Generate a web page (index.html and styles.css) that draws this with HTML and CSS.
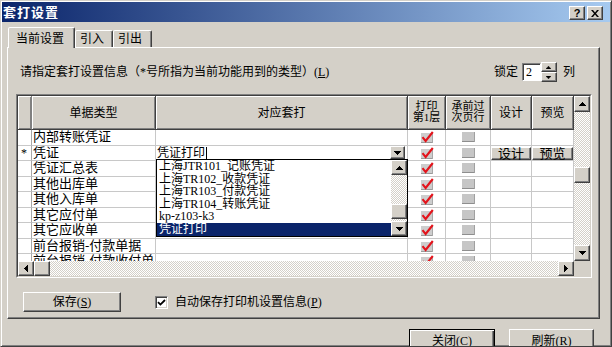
FILE: index.html
```html
<!DOCTYPE html>
<html lang="zh-CN">
<head>
<meta charset="utf-8">
<title>套打设置</title>
<link rel="stylesheet" href="styles.css">
</head>
<body>
<svg class="defs" width="0" height="0" aria-hidden="true">
  <symbol id="rc" viewBox="0 0 14 12">
    <rect x="1" y="2" width="12" height="10" fill="#cdcdcd"/>
    <rect x="1" y="11" width="12" height="1" fill="#9a9a9a"/>
    <rect x="12" y="2" width="1" height="10" fill="#a8a8a8"/>
    <path d="M2.5 6.2 L5.6 10 L12.8 1" fill="none" stroke="#e3141c" stroke-width="2.1"/>
  </symbol>
  <symbol id="gb" viewBox="0 0 13 10">
    <rect width="13" height="10" fill="#c6c6c6"/>
    <rect y="9" width="13" height="1" fill="#8e8e8e"/>
    <rect x="12" width="1" height="10" fill="#a0a0a0"/>
  </symbol>
  <symbol id="up" viewBox="0 0 7 4"><path d="M3 0h1v1h1v1h1v1h1v1H0V3h1V2h1V1h1z"/></symbol>
  <symbol id="down" viewBox="0 0 7 4"><path d="M0 0h7v1H6v1H5v1H4v1H3V3H2V2H1V1H0z"/></symbol>
  <symbol id="left" viewBox="0 0 4 7"><path d="M0 3h1V2h1V1h1V0h1v7H3V6H2V5H1V4H0z"/></symbol>
  <symbol id="right" viewBox="0 0 4 7"><path d="M0 0h1v1h1v1h1v1h1v1H3v1H2v1H1v1H0z"/></symbol>
</svg>
<div class="window">
  <div class="titlebar">
    <span class="title">套打设置</span>
    <div class="caption-btns">
      <div class="cap-btn raised"><span class="q">?</span></div>
      <div class="cap-btn raised">
        <svg width="8" height="7" viewBox="0 0 8 7"><path d="M0 0h2l2 2.5 2-2.5h2L5 3.5 8 7H6L4 4.5 2 7H0l3-3.5z"/></svg>
      </div>
    </div>
  </div>

  <div class="tabs">
    <div class="tab active">当前设置</div>
    <div class="tab">引入</div>
    <div class="tab">引出</div>
  </div>

  <div class="panel">
    <div class="info-row">
      <span class="info">请指定套打设置信息（*号所指为当前功能用到的类型）(<u>L</u>)</span>
      <div class="lock">
        <span>锁定</span>
        <div class="spin-input">2</div>
        <div class="spin">
          <div class="spin-btn raised"><svg width="5" height="3" viewBox="0 0 7 4"><use href="#up"/></svg></div>
          <div class="spin-btn raised"><svg width="5" height="3" viewBox="0 0 7 4"><use href="#down"/></svg></div>
        </div>
        <span class="lie">列</span>
      </div>
    </div>

    <div class="grid">
      <div class="grid-inner">
        <div class="grid-main">
          <div class="viewport">
            <div class="row head">
              <div class="c"></div>
              <div class="c">单据类型</div>
              <div class="c">对应套打</div>
              <div class="c two"><span>打印</span><span>第1层</span></div>
              <div class="c two"><span>承前过</span><span>次页行</span></div>
              <div class="c">设计</div>
              <div class="c">预览</div>
            </div>

            <div class="row body">
              <div class="c rh"></div>
              <div class="c">内部转账凭证</div>
              <div class="c"></div>
              <div class="c ck"><svg width="14" height="12"><use href="#rc"/></svg></div>
              <div class="c ck"><svg width="13" height="10"><use href="#gb"/></svg></div>
              <div class="c"></div>
              <div class="c"></div>
            </div>

            <div class="row body">
              <div class="c rh">*</div>
              <div class="c">凭证</div>
              <div class="c combo">
                <span class="combo-text">凭证打印</span><span class="caret"></span>
                <div class="drop-btn raised"><svg width="7" height="4"><use href="#down"/></svg></div>
              </div>
              <div class="c ck"><svg width="14" height="12"><use href="#rc"/></svg></div>
              <div class="c ck"><svg width="13" height="10"><use href="#gb"/></svg></div>
              <div class="c bc"><div class="cell-btn raised">设计</div></div>
              <div class="c bc"><div class="cell-btn raised">预览</div></div>
            </div>

            <div class="row body">
              <div class="c rh"></div>
              <div class="c">凭证汇总表</div>
              <div class="c"></div>
              <div class="c ck"><svg width="14" height="12"><use href="#rc"/></svg></div>
              <div class="c ck"><svg width="13" height="10"><use href="#gb"/></svg></div>
              <div class="c"></div>
              <div class="c"></div>
            </div>

            <div class="row body">
              <div class="c rh"></div>
              <div class="c">其他出库单</div>
              <div class="c"></div>
              <div class="c ck"><svg width="14" height="12"><use href="#rc"/></svg></div>
              <div class="c ck"><svg width="13" height="10"><use href="#gb"/></svg></div>
              <div class="c"></div>
              <div class="c"></div>
            </div>

            <div class="row body">
              <div class="c rh"></div>
              <div class="c">其他入库单</div>
              <div class="c"></div>
              <div class="c ck"><svg width="14" height="12"><use href="#rc"/></svg></div>
              <div class="c ck"><svg width="13" height="10"><use href="#gb"/></svg></div>
              <div class="c"></div>
              <div class="c"></div>
            </div>

            <div class="row body">
              <div class="c rh"></div>
              <div class="c">其它应付单</div>
              <div class="c"></div>
              <div class="c ck"><svg width="14" height="12"><use href="#rc"/></svg></div>
              <div class="c ck"><svg width="13" height="10"><use href="#gb"/></svg></div>
              <div class="c"></div>
              <div class="c"></div>
            </div>

            <div class="row body">
              <div class="c rh"></div>
              <div class="c">其它应收单</div>
              <div class="c"></div>
              <div class="c ck"><svg width="14" height="12"><use href="#rc"/></svg></div>
              <div class="c ck"><svg width="13" height="10"><use href="#gb"/></svg></div>
              <div class="c"></div>
              <div class="c"></div>
            </div>

            <div class="row body">
              <div class="c rh"></div>
              <div class="c">前台报销-付款单据</div>
              <div class="c"></div>
              <div class="c ck"><svg width="14" height="12"><use href="#rc"/></svg></div>
              <div class="c ck"><svg width="13" height="10"><use href="#gb"/></svg></div>
              <div class="c"></div>
              <div class="c"></div>
            </div>

            <div class="row body">
              <div class="c rh"></div>
              <div class="c">前台报销-付款收付单</div>
              <div class="c"></div>
              <div class="c ck"><svg width="14" height="12"><use href="#rc"/></svg></div>
              <div class="c ck"><svg width="13" height="10"><use href="#gb"/></svg></div>
              <div class="c"></div>
              <div class="c"></div>
            </div>

            <div class="droplist">
              <div class="items">
                <div class="item">上海JTR101_记账凭证</div>
                <div class="item">上海TR102_收款凭证</div>
                <div class="item">上海TR103_付款凭证</div>
                <div class="item">上海TR104_转账凭证</div>
                <div class="item">kp-z103-k3</div>
                <div class="item sel">凭证打印</div>
              </div>
              <div class="lscroll">
                <div class="arrow-v raised"><svg width="7" height="4"><use href="#up"/></svg></div>
                <div class="track-v">
                  <div class="thumb-v raised lthumb"></div>
                </div>
                <div class="arrow-v raised"><svg width="7" height="4"><use href="#down"/></svg></div>
              </div>
            </div>
          </div>

          <div class="vscroll">
            <div class="arrow-v big raised"><svg width="7" height="4"><use href="#up"/></svg></div>
            <div class="track-v">
              <div class="thumb-v big raised gthumb"></div>
            </div>
            <div class="arrow-v big raised"><svg width="7" height="4"><use href="#down"/></svg></div>
          </div>
        </div>

        <div class="hscroll">
          <div class="arrow-h raised"><svg width="4" height="7"><use href="#left"/></svg></div>
          <div class="thumb-h raised"></div>
          <div class="track-h"></div>
          <div class="arrow-h raised"><svg width="4" height="7"><use href="#right"/></svg></div>
          <div class="corner"></div>
        </div>
      </div>
    </div>

    <div class="bottom-row">
      <div class="btn save raised">保存(<u>S</u>)</div>
      <div class="chk">
        <span class="chk-box">
          <svg width="9" height="9" viewBox="0 0 9 9"><path d="M1 4.2 L3.4 6.6 L8 2" fill="none" stroke="#000" stroke-width="1.8"/></svg>
        </span>
        <span class="chk-label">自动保存打印机设置信息(<u>P</u>)</span>
      </div>
    </div>
  </div>

  <div class="footer">
    <div class="btn default">关闭(<u>C</u>)</div>
    <div class="btn raised">刷新(<u>R</u>)</div>
  </div>
</div>
</body>
</html>
```

FILE: styles.css
```css
* {
  box-sizing: border-box;
  margin: 0;
  padding: 0;
}

html,
body {
  width: 612px;
  height: 347px;
  overflow: hidden;
}

body {
  background: #d4d0c8;
  font-family: "Liberation Serif", "Noto Sans CJK SC", serif;
  font-size: 12px;
  color: #000;
}

.defs {
  display: block;
  width: 0;
  height: 0;
  overflow: hidden;
}

u {
  text-decoration: underline;
  text-underline-offset: 1px;
}

/* generic 3D raised look */
.raised {
  background: #d4d0c8;
  border: 1px solid;
  border-color: #fff #404040 #404040 #fff;
  box-shadow: inset -1px -1px #808080;
}

.window {
  width: 612px;
  height: 347px;
  overflow: hidden;
  background: #d4d0c8;
  border: 1px solid;
  border-color: #d4d0c8 #404040 #404040 #d4d0c8;
  box-shadow: inset 1px 1px #fff, inset -1px -1px #808080;
  padding: 1px;
}

/* title bar */
.titlebar {
  height: 20px;
  display: flex;
  justify-content: space-between;
  align-items: flex-start;
  background: linear-gradient(to right, #0a246a, #a6caf0);
  padding: 0 7px 0 1px;
}

.title {
  color: #fff;
  font-family: "Noto Sans CJK SC", sans-serif;
  font-weight: bold;
  font-size: 13px;
  letter-spacing: 1px;
  line-height: 20px;
}

.caption-btns {
  display: flex;
  gap: 2px;
  margin-top: 4px;
}

.cap-btn {
  width: 16px;
  height: 14px;
  display: flex;
  align-items: center;
  justify-content: center;
}

.cap-btn .q {
  font-family: "Liberation Sans", sans-serif;
  font-weight: bold;
  font-size: 11px;
  line-height: 11px;
}

/* tabs */
.tabs {
  display: flex;
  align-items: flex-end;
  height: 20px;
  margin: 5px 0 0 6px;
  position: relative;
  z-index: 1;
}

.tab {
  height: 17px;
  border: 1px solid;
  border-bottom: none;
  border-color: #fff #404040 transparent #fff;
  box-shadow: inset -1px 0 #808080;
  border-radius: 2px 2px 0 0;
  padding-left: 4px;
  line-height: 16px;
  background: #d4d0c8;
}

.tab:nth-child(2) {
  width: 38px;
}

.tab:nth-child(3) {
  width: 39px;
}

.tab.active {
  width: 67px;
  height: 21px;
  margin-bottom: -1px;
  padding: 3px 0 0 7px;
}

/* tab panel */
.panel {
  margin-left: 5px;
  width: 593px;
  height: 272px;
  border: 1px solid;
  border-color: #fff #404040 #404040 #fff;
  box-shadow: inset -1px -1px #808080;
  padding: 14px 0 0 8px;
}

.info-row {
  width: 576px;
  height: 20px;
  display: flex;
  align-items: center;
  justify-content: space-between;
  padding: 0 17px 0 4px;
  line-height: 14px;
}

.lock {
  display: flex;
  align-items: center;
}

.spin-input {
  width: 19px;
  height: 18px;
  margin-left: 4px;
  background: #fff;
  border: 1px solid;
  border-color: #808080 #fff #fff #808080;
  box-shadow: inset 1px 1px #404040;
  padding: 1px 0 0 3px;
  line-height: 14px;
}

.spin {
  width: 16px;
  height: 20px;
  display: flex;
  flex-direction: column;
}

.spin-btn {
  flex: 1;
  display: flex;
  align-items: center;
  justify-content: center;
}

.lie {
  margin-left: 6px;
}

/* grid */
.grid {
  margin-top: 12px;
  width: 576px;
  height: 184px;
  border: 1px solid;
  border-color: #808080 #fff #fff #808080;
}

.grid-inner {
  height: 100%;
  border: 1px solid;
  border-color: #404040 #d4d0c8 #d4d0c8 #404040;
  display: flex;
  flex-direction: column;
  background: #fff;
}

.grid-main {
  display: flex;
  height: 165px;
}

.viewport {
  position: relative;
  width: 556px;
  height: 165px;
  overflow: hidden;
}

.row {
  display: grid;
  grid-template-columns: 14px 124px 252px 38px 45px 41px 42px;
  height: 15.5px;
}

.row.head {
  height: 34px;
}

.head .c {
  background: #d4d0c8;
  border-right: 1px solid #404040;
  border-bottom: 1px solid #404040;
  box-shadow: inset 1px 1px #fff, inset -1px -1px #808080;
  display: flex;
  align-items: center;
  justify-content: center;
  text-align: center;
  line-height: 14px;
}

.head .c.two {
  flex-direction: column;
  font-size: 11px;
  line-height: 11px;
  padding-bottom: 2px;
}

.head .c:first-child {
  border-right-color: #808080;
}

.body .c {
  border-right: 1px solid #c8c8c8;
  border-bottom: 1px solid #c8c8c8;
  font-size: 13px;
  line-height: 14px;
  padding-left: 1px;
  white-space: nowrap;
  overflow: hidden;
}

.body .rh {
  border-right-color: #a8a8a8;
  padding-left: 3px;
  font-size: 12px;
}

.body .ck {
  display: flex;
  align-items: center;
  justify-content: center;
  padding-left: 0;
}

.body .combo {
  display: flex;
  align-items: center;
  font-size: 12px;
  overflow: visible;
}

.caret {
  width: 1px;
  height: 12px;
  background: #000;
  margin-left: 1px;
}

.drop-btn {
  margin-left: auto;
  margin-right: 2px;
  width: 15px;
  height: 13px;
  display: flex;
  align-items: center;
  justify-content: center;
}

.body .bc {
  padding: 1px 0 0 0;
}

.cell-btn {
  width: 100%;
  height: 100%;
  text-align: center;
  font-size: 13px;
  line-height: 12px;
}

/* drop-down list (overlay) */
.droplist {
  position: absolute;
  left: 138px;
  top: 63px;
  width: 252px;
  height: 78px;
  border: 1px solid #000;
  background: #fff;
  display: flex;
  z-index: 2;
}

.droplist .items {
  flex: 1;
  overflow: hidden;
}

.droplist .item {
  height: 12.6px;
  line-height: 12.6px;
  font-size: 12px;
  padding-left: 2px;
  white-space: nowrap;
}

.droplist .item.sel {
  background: #0a246a;
  color: #fff;
}

.lscroll,
.vscroll {
  width: 16px;
  display: flex;
  flex-direction: column;
}

.arrow-v {
  height: 15px;
  display: flex;
  align-items: center;
  justify-content: center;
}

.arrow-v.big {
  height: 16px;
}

.track-v {
  flex: 1;
  background: repeating-conic-gradient(#d4d0c8 0 25%, #fff 0 50%) 0 0 / 2px 2px;
}

.thumb-v {
  height: 15px;
}

.lthumb {
  margin-top: 29px;
}

.gthumb {
  height: 16px;
  margin-top: 55px;
}

.hscroll {
  display: flex;
  height: 15px;
}

.arrow-h {
  width: 16px;
  display: flex;
  align-items: center;
  justify-content: center;
}

.thumb-h {
  width: 16px;
}

.track-h {
  flex: 1;
  background: repeating-conic-gradient(#d4d0c8 0 25%, #fff 0 50%) 0 0 / 2px 2px;
}

.corner {
  width: 16px;
  background: #d4d0c8;
}

/* bottom row */
.bottom-row {
  display: flex;
  align-items: center;
  margin-top: 14px;
  padding-left: 7px;
}

.btn {
  display: flex;
  align-items: center;
  justify-content: center;
  line-height: 14px;
}

.btn.save {
  width: 98px;
  height: 20px;
}

.chk {
  display: flex;
  align-items: center;
  margin-left: 34px;
}

.chk-box {
  width: 13px;
  height: 13px;
  background: #fff;
  border: 1px solid;
  border-color: #808080 #fff #fff #808080;
  box-shadow: inset 1px 1px #404040, inset -1px -1px #d4d0c8;
  display: flex;
  align-items: center;
  justify-content: center;
}

.chk-label {
  margin-left: 7px;
  line-height: 14px;
}

/* footer */
.footer {
  display: flex;
  justify-content: flex-end;
  gap: 14px;
  padding-right: 16px;
  margin-top: 10px;
}

.footer .btn {
  height: 23px;
  width: 85px;
}

.footer .btn.default {
  width: 86px;
  background: #d4d0c8;
  border: 1px solid #000;
  box-shadow: inset 1px 1px #fff, inset -1px -1px #404040, inset -2px -2px #808080;
}
```
